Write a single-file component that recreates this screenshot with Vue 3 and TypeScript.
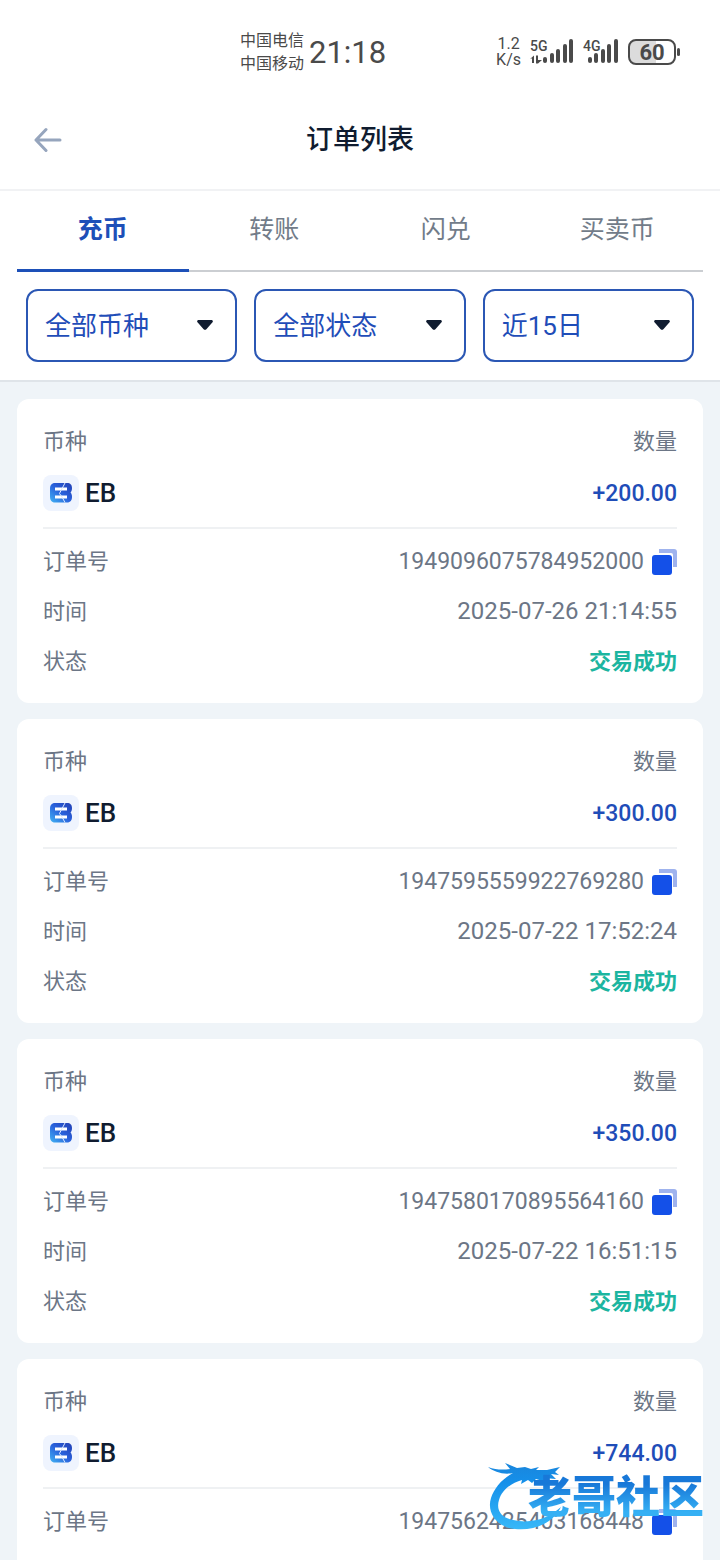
<script setup lang="ts">
import { ref } from 'vue'

interface Order {
  id: string
  coin: string
  amount: string
  time: string
  status: string
}

const tabs: string[] = ['充币', '转账', '闪兑', '买卖币']
const activeTab = ref<number>(0)

const filters: { label: string; options: string[] }[] = [
  { label: '币种', options: ['全部币种', 'EB'] },
  { label: '状态', options: ['全部状态', '交易成功'] },
  { label: '时间', options: ['近15日', '近30日'] },
]

const orders: Order[] = [
  { id: '1949096075784952000', coin: 'EB', amount: '+200.00', time: '2025-07-26 21:14:55', status: '交易成功' },
  { id: '1947595559922769280', coin: 'EB', amount: '+300.00', time: '2025-07-22 17:52:24', status: '交易成功' },
  { id: '1947580170895564160', coin: 'EB', amount: '+350.00', time: '2025-07-22 16:51:15', status: '交易成功' },
  { id: '1947562425403168448', coin: 'EB', amount: '+744.00', time: '2025-07-22 15:40:44', status: '交易成功' },
]

const copy = (text: string): void => {
  void navigator.clipboard?.writeText(text)
}
</script>

<template>
  <div class="screen">
    <div class="statusbar">
      <div class="status-left">
        <div class="carriers">
          <span>中国电信</span>
          <span>中国移动</span>
        </div>
        <span class="clock">21:18</span>
      </div>
      <div class="status-right">
        <div class="speed"><span>1.2</span><span>K/s</span></div>
        <div class="signal">
          <span class="net">5G</span>
          <svg width="44" height="26" viewBox="0 0 44 26" fill="#4a4a4a">
            <path d="M0 20l4-3.500v7.500h-2v-4.500H0zM6 16.500h2V21h4l-4 3.500H6z" />
            <rect x="13" y="18" width="4" height="6" rx="2" />
            <rect x="20" y="14" width="4" height="10" rx="2" />
            <rect x="26" y="10" width="4" height="14" rx="2" />
            <rect x="33" y="5" width="4" height="19" rx="2" />
            <rect x="39" y="0" width="4" height="24" rx="2" />
          </svg>
        </div>
        <div class="signal">
          <span class="net">4G</span>
          <svg width="36" height="26" viewBox="0 0 36 26" fill="#4a4a4a">
            <rect x="5" y="18" width="4" height="6" rx="2" />
            <rect x="11" y="14" width="4" height="10" rx="2" />
            <rect x="18" y="10" width="4" height="14" rx="2" />
            <rect x="24" y="5" width="4" height="19" rx="2" />
            <rect x="31" y="0" width="4" height="24" rx="2" />
          </svg>
        </div>
        <div class="battery"><span class="level">60</span></div>
      </div>
    </div>

    <header class="header">
      <button class="back" type="button" aria-label="返回">
        <svg width="28" height="26" viewBox="0 0 28 26" fill="none" stroke="#96a5bd" stroke-width="3" stroke-linecap="round" stroke-linejoin="round">
          <path d="M26 13H2M12 2.500L2 13l10 10.500" />
        </svg>
      </button>
      <h1>订单列表</h1>
    </header>

    <section class="controls">
      <nav class="tabs">
        <button
          v-for="(tab, i) in tabs"
          :key="tab"
          type="button"
          class="tab"
          :class="{ active: i === activeTab }"
          @click="activeTab = i"
        >{{ tab }}</button>
      </nav>
      <div class="filters">
        <div v-for="f in filters" :key="f.label" class="filter">
          <select :aria-label="f.label">
            <option v-for="o in f.options" :key="o">{{ o }}</option>
          </select>
          <svg class="caret" width="16" height="10" viewBox="0 0 16 10" fill="#101c30">
            <path d="M1.500 0h13c1.200 0 1.800 1.500 1 2.300L9.600 9a2.200 2.200 0 0 1-3.200 0L.5 2.300C-.3 1.500.3 0 1.500 0z" />
          </svg>
        </div>
      </div>
    </section>

    <main class="list">
      <article v-for="order in orders" :key="order.id" class="card">
        <div class="row head"><span>币种</span><span>数量</span></div>
        <div class="row coin">
          <span class="coin-name">
            <svg width="36" height="36" viewBox="0 0 36 36">
              <defs>
                <linearGradient id="coin-fill" x1="1" y1="0" x2="0" y2="1">
                  <stop offset="0" stop-color="#2340b4" />
                  <stop offset="0.500" stop-color="#2a62dc" />
                  <stop offset="1" stop-color="#42b4f4" />
                </linearGradient>
              </defs>
              <rect width="36" height="36" rx="8" fill="#eff4fe" />
              <path d="M12 8h12c3.500 0 5 2 5 5 0 2-.6 3.500-1.500 4.500 1 1 1.500 2.500 1.500 4.500 0 3-1.500 5.500-5 5.500H12c-3.500 0-5-2.500-5-6v-7.500c0-3.500 1.500-6 5-6z" fill="url(#coin-fill)" />
              <path d="M12 12.500h12v3H12zM12 20.500h12v3H12z" fill="#fff" />
              <path d="M22 8l-4 7.500-1.500 3L19 22l3 5.500" fill="none" stroke="#dce9ff" stroke-width="1" />
            </svg>
            {{ order.coin }}
          </span>
          <span class="amount">{{ order.amount }}</span>
        </div>
        <dl class="details">
          <div class="row">
            <dt>订单号</dt>
            <dd>
              {{ order.id }}
              <button class="copy" type="button" aria-label="复制订单号" @click="copy(order.id)">
                <svg width="25" height="28" viewBox="0 0 25 28">
                  <path d="M7 2h15a3 3 0 0 1 3 3v15h-4V8a2 2 0 0 0-2-2H7z" fill="#9fb3ee" />
                  <rect x="0" y="8" width="20" height="20" rx="3" fill="#1450e8" />
                </svg>
              </button>
            </dd>
          </div>
          <div class="row"><dt>时间</dt><dd class="time">{{ order.time }}</dd></div>
          <div class="row"><dt>状态</dt><dd class="success">{{ order.status }}</dd></div>
        </dl>
      </article>
    </main>

    <div class="watermark">
      <svg class="dragon" width="100" height="72" viewBox="0 0 100 72">
        <defs>
          <linearGradient id="dragon-fill" x1="0" y1="0" x2="0" y2="1">
            <stop offset="0" stop-color="#1a86dc" />
            <stop offset="0.300" stop-color="#1590ea" />
            <stop offset="1" stop-color="#38b8f8" />
          </linearGradient>
        </defs>
        <g fill="url(#dragon-fill)">
          <path d="M0 5c8 3 15 3 22 2L17 1l12 5 8-1 6 2 8-2-3 3h11l13-3-5 5 4 3-8-1 5 5-12-1 2 4-10-3-4 4-4-3-7 4 1-4c-10 3-20 9-23 20-4 13 6 20 20 21 16 2 31-4 42-14-8 16-26 24-46 22C11 66-2 52 3 36 6 26 15 16 25 11 16 13 6 10 0 5z" />
        </g>
      </svg>
      <span class="brand">老哥社区</span>
    </div>
  </div>
</template>

<style>
body {
  margin: 0;
  background: #eff4f8;
}
</style>

<style scoped>
.screen {
  position: relative;
  display: flex;
  flex-direction: column;
  height: 100vh;
  overflow: hidden;
  background: #eff4f8;
  color: #6c7686;
  font-family: Roboto, "Noto Sans CJK SC", sans-serif;
  font-size: 22px;
}

button,
select {
  margin: 0;
  padding: 0;
  border: 0;
  background: none;
  color: inherit;
  font: inherit;
}

svg {
  display: block;
  flex: none;
}

.statusbar {
  display: flex;
  flex: none;
  justify-content: space-between;
  align-items: center;
  height: 104px;
  padding: 0 40px 0 240px;
  background: #fff;
  color: #4a4a4a;
}

.status-left,
.status-right {
  display: flex;
  align-items: center;
}

.status-left {
  gap: 5px;
}

.carriers {
  display: flex;
  flex-direction: column;
  font-size: 16px;
  line-height: 23px;
}

.clock {
  font-size: 31px;
}

.status-right {
  gap: 9px;
}

.speed {
  display: flex;
  flex-direction: column;
  align-items: center;
  font-size: 16px;
  line-height: 16px;
}

.signal {
  position: relative;
}

.net {
  position: absolute;
  top: -1px;
  left: 0;
  font-size: 14px;
  font-weight: 500;
  line-height: 16px;
}

.battery {
  position: relative;
  box-sizing: border-box;
  width: 48px;
  height: 26px;
  margin-right: 4px;
  border: 2px solid #4a4a4a;
  border-radius: 8px;
  background: linear-gradient(90deg, #dcdcdc 60%, #fff 60%);
  text-align: center;
}

.battery::after {
  content: "";
  position: absolute;
  top: 7px;
  right: -6px;
  width: 3px;
  height: 8px;
  border-radius: 2px;
  background: #4a4a4a;
}

.level {
  display: block;
  font-size: 22px;
  font-weight: 700;
  line-height: 23px;
}

.header {
  display: grid;
  grid-template-columns: 60px 1fr 60px;
  flex: none;
  align-items: center;
  box-sizing: border-box;
  height: 87px;
  padding: 0 34px 14px;
  border-bottom: 2px solid #f1f2f4;
  background: #fff;
}

.back {
  width: 28px;
}

h1 {
  margin: 0;
  color: #101c30;
  font-size: 27px;
  font-weight: 500;
  line-height: 40px;
  text-align: center;
}

.controls {
  flex: none;
  border-bottom: 2px solid #dfe4e9;
  background: #fff;
}

.tabs {
  display: flex;
  margin: 0 17px;
  box-shadow: inset 0 -2px #cbced2;
}

.tab {
  flex: 1;
  height: 81px;
  padding-bottom: 6px;
  border-bottom: 3px solid transparent;
  color: #727c89;
  font-size: 25px;
}

.tab.active {
  border-bottom-color: #1d50b8;
  color: #1d4fb8;
  font-weight: 700;
}

.filters {
  display: flex;
  gap: 17px;
  padding: 17px 26px 18px;
}

.filter {
  position: relative;
  flex: 1;
}

.filter select {
  box-sizing: border-box;
  width: 100%;
  height: 73px;
  padding: 0 48px 0 17px;
  border: 2px solid #2b57b4;
  border-radius: 12px;
  appearance: none;
  color: #1f4db8;
  font-size: 26px;
}

.caret {
  position: absolute;
  top: 31px;
  right: 24px;
  pointer-events: none;
}

.list {
  display: flex;
  flex: 1;
  flex-direction: column;
  gap: 16px;
  min-height: 0;
  padding: 17px;
  overflow: auto;
  scrollbar-width: none;
}

.card {
  flex: none;
  padding: 26px 26px 17px;
  border-radius: 12px;
  background: #fff;
}

.row {
  display: flex;
  justify-content: space-between;
  align-items: center;
}

.head {
  height: 27px;
}

.coin {
  height: 36px;
  padding: 23px 0 16px;
  border-bottom: 2px solid #eff1f3;
}

.coin-name {
  display: flex;
  align-items: center;
  gap: 6px;
  color: #101c30;
  font-size: 26px;
  font-weight: 500;
}

.amount {
  color: #1f4db8;
  font-size: 23px;
  font-weight: 500;
}

.details {
  margin: 0;
  padding-top: 7px;
}

.details .row {
  height: 50px;
}

dt {
  padding-bottom: 4px;
}

dd {
  display: flex;
  align-items: center;
  gap: 8px;
  margin: 0;
  font-size: 23px;
}

.time {
  font-size: 24px;
}

.success {
  padding-bottom: 4px;
  color: #1cb5a0;
  font-size: 22px;
  font-weight: 700;
}

.watermark {
  position: absolute;
  right: 16px;
  bottom: 26px;
  display: flex;
  align-items: center;
  pointer-events: none;
}

.dragon {
  margin-right: -60px;
}

.brand {
  background: linear-gradient(#1878d8 25%, #35b0f4 75%);
  background-clip: text;
  color: transparent;
  font-size: 44px;
  font-weight: 900;
  line-height: 56px;
}
</style>
